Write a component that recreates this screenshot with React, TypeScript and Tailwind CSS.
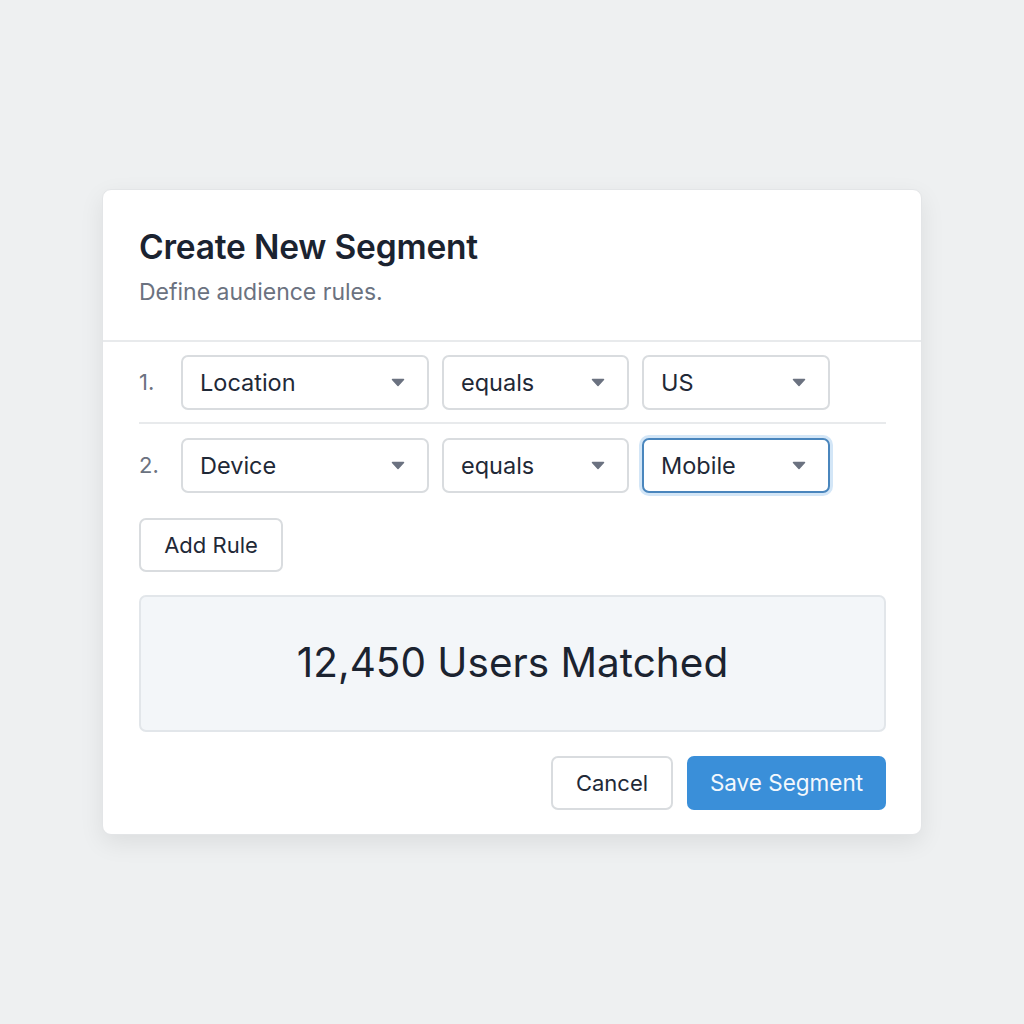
import React from 'react';

function Caret() {
  return (
    <svg width="14" height="9" viewBox="0 0 14 9" className="shrink-0">
      <path d="M1.5 1.5 L12.5 1.5 L7 7.5 Z" fill="#6b7280" stroke="#6b7280" strokeWidth="1.5" strokeLinejoin="round" />
    </svg>
  );
}

function Select({ value, width, active = false }: { value: string; width: string; active?: boolean }) {
  return (
    <div
      className={`${width} h-[55px] flex items-center justify-between pl-[17px] pr-[22px] rounded-[7px] bg-white text-[23.5px] text-[#1f2937] ${
        active
          ? 'border-2 border-[#4a86bd] shadow-[0_0_0_3px_#d3e6f7]'
          : 'border-2 border-[#d9dcdf]'
      }`}
    >
      <span className="leading-none pt-[1px]">{value}</span>
      <Caret />
    </div>
  );
}

export default function App() {
  const rules = [
    { n: '1.', field: 'Location', op: 'equals', val: 'US', active: false },
    { n: '2.', field: 'Device', op: 'equals', val: 'Mobile', active: true },
  ];

  return (
    <div className="w-full h-[1024px] bg-[#eef0f1] flex justify-center pt-[189px] font-['Inter','Noto_Sans',sans-serif]">
      <div className="w-[820px] h-[646px] bg-white rounded-[9px] border border-[#e3e5e7] shadow-[0_8px_24px_rgba(0,0,0,0.08)] flex flex-col">
        {/* header */}
        <div className="px-[36px] pt-[35px] h-[152px] border-b-2 border-[#e8eaec]">
          <h1 className="text-[33.5px] leading-[44px] font-semibold text-[#1b2330] tracking-[-0.2px]">Create New Segment</h1>
          <p className="mt-[8px] text-[23px] leading-[30px] text-[#6b7280]">Define audience rules.</p>
        </div>

        <div className="pl-[36px] pr-[35px] flex flex-col">
          {rules.map((r, i) => (
            <div
              key={r.n}
              className={`flex items-center h-[82px] ${i === 0 ? 'border-b-2 border-[#e8eaec]' : ''}`}
            >
              <span className="w-[42px] text-[22px] text-[#6b7280]">{r.n}</span>
              <div className="flex gap-[13px]">
                <Select value={r.field} width="w-[248px]" />
                <Select value={r.op} width="w-[187px]" />
                <Select value={r.val} width="w-[188px]" active={r.active} />
              </div>
            </div>
          ))}

          <div className="mt-[12px]">
            <button className="h-[54px] w-[144px] rounded-[7px] border-2 border-[#d9dcdf] bg-white text-[22px] text-[#1f2937]">
              Add Rule
            </button>
          </div>

          <div className="mt-[23px] h-[137px] rounded-[7px] border-2 border-[#e2e6ea] bg-[#f3f6f9] flex items-center justify-center">
            <span className="text-[40.5px] text-[#1b2330]">12,450 Users Matched</span>
          </div>

          <div className="mt-[24px] flex justify-end gap-[14px]">
            <button className="h-[54px] w-[122px] rounded-[7px] border-2 border-[#d9dcdf] bg-white text-[22px] text-[#1f2937]">
              Cancel
            </button>
            <button className="h-[54px] w-[199px] rounded-[7px] bg-[#3a8fd9] text-[22.5px] text-[#f3f8fd]">
              Save Segment
            </button>
          </div>
        </div>
      </div>
    </div>
  );
}
